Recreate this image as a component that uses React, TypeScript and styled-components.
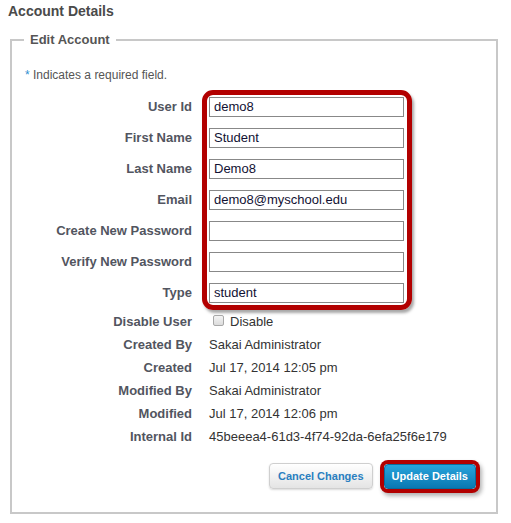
import React from "react";
import styled, { createGlobalStyle } from "styled-components";

const Global = createGlobalStyle`
  html, body { margin: 0; padding: 0; background: #fff; }
  body { font-family: "Liberation Sans", Arial, sans-serif; }
`;

const Page = styled.div`
  padding: 3px 11px 0 8px;
  width: 511px;
  box-sizing: border-box;
`;

const Title = styled.h2`
  margin: 0 0 13px 0;
  font-size: 14px;
  line-height: 16px;
  font-weight: bold;
  color: #4a4a4a;
`;

const Fieldset = styled.fieldset`
  margin: 0 0 0 2px;
  padding: 20px 12px 23px 13px;
  border: 2px solid #c8c8c8;
  width: 488px;
  box-sizing: border-box;
  min-width: 0;
`;

const Legend = styled.legend`
  margin-left: -1px;
  padding: 0 6px;
  font-size: 13px;
  line-height: 16px;
  font-weight: bold;
  color: #555;
`;

const Note = styled.div`
  font-size: 12px;
  line-height: 15px;
  color: #555;
  margin-bottom: 8px;
`;

const Star = styled.span`
  color: #2f8fd0;
`;

const InputGroup = styled.div`
  position: relative;
`;

const Highlight = styled.div`
  position: absolute;
  left: 177px;
  top: -1px;
  width: 210px;
  height: 220px;
  box-sizing: border-box;
  border: 5px solid #b20000;
  border-radius: 11px;
  box-shadow: 2px 3px 3px rgba(0, 0, 0, 0.35);
  pointer-events: none;
`;

const Row = styled.div<{ $h: number }>`
  display: grid;
  grid-template-columns: 167px 1fr;
  column-gap: 17px;
  align-items: center;
  height: ${(p) => p.$h}px;
`;

const Label = styled.div`
  text-align: right;
  font-size: 13px;
  font-weight: bold;
  color: #525560;
  white-space: nowrap;
`;

const Value = styled.div`
  font-size: 13px;
  color: #333;
  white-space: nowrap;
  display: flex;
  align-items: center;
`;

const Field = styled.input`
  width: 195px;
  height: 20px;
  box-sizing: border-box;
  border: 1px solid #888;
  padding: 0 4px;
  margin: 0;
  font-family: "Liberation Sans", Arial, sans-serif;
  font-size: 13px;
  color: #111133;
  background: #fff;
  outline: none;
`;

const Check = styled.span`
  display: inline-block;
  width: 11px;
  height: 11px;
  box-sizing: border-box;
  border: 1px solid #a8a8a8;
  border-radius: 2px;
  background: linear-gradient(#f4f4f4, #dcdcdc);
  margin: 0 6px 0 4px;
  position: relative;
  top: -1px;
`;

const Buttons = styled.div`
  display: flex;
  justify-content: flex-end;
  align-items: center;
  gap: 11px;
  margin-top: 15px;
  padding-right: 8px;
`;

const Button = styled.button<{ $primary?: boolean }>`
  font-family: "Liberation Sans", Arial, sans-serif;
  font-size: 11px;
  font-weight: bold;
  height: ${(p) => (p.$primary ? 25 : 26)}px;
  padding: 0 ${(p) => (p.$primary ? 7 : 8)}px;
  border-radius: 4px;
  cursor: pointer;
  color: ${(p) => (p.$primary ? "#fff" : "#2a7fc0")};
  border: 1px solid ${(p) => (p.$primary ? "#0a6a9c" : "#cfcfcf")};
  background: ${(p) =>
    p.$primary
      ? "linear-gradient(#27a4dc, #0a78b2)"
      : "linear-gradient(#ffffff, #e4e4e4)"};
  box-shadow: ${(p) =>
    p.$primary
      ? "0 0 0 4px #b20000, 2px 3px 4px 4px rgba(0,0,0,0.3)"
      : "0 1px 2px rgba(0,0,0,0.15)"};
`;

const editFields: [string, string][] = [
  ["User Id", "demo8"],
  ["First Name", "Student"],
  ["Last Name", "Demo8"],
  ["Email", "demo8@myschool.edu"],
  ["Create New Password", ""],
  ["Verify New Password", ""],
  ["Type", "student"],
];

const infoRows: [string, string][] = [
  ["Created By", "Sakai Administrator"],
  ["Created", "Jul 17, 2014 12:05 pm"],
  ["Modified By", "Sakai Administrator"],
  ["Modified", "Jul 17, 2014 12:06 pm"],
  ["Internal Id", "45beeea4-61d3-4f74-92da-6efa25f6e179"],
];

export default function App() {
  return (
    <Page>
      <Global />
      <Title>Account Details</Title>
      <Fieldset>
        <Legend>Edit Account</Legend>
        <Note>
          <Star>*</Star> Indicates a required field.
        </Note>
        <InputGroup>
          {editFields.map(([label, value]) => (
            <Row key={label} $h={31}>
              <Label>{label}</Label>
              <Value>
                <Field
                  type={label.includes("Password") ? "password" : "text"}
                  defaultValue={value}
                />
              </Value>
            </Row>
          ))}
          <Highlight />
        </InputGroup>
        <Row $h={2} />
        <Row $h={23}>
          <Label>Disable User</Label>
          <Value>
            <Check />
            Disable
          </Value>
        </Row>
        {infoRows.map(([label, value]) => (
          <Row key={label} $h={23}>
            <Label>{label}</Label>
            <Value>{value}</Value>
          </Row>
        ))}
        <Buttons>
          <Button>Cancel Changes</Button>
          <Button $primary>Update Details</Button>
        </Buttons>
      </Fieldset>
    </Page>
  );
}
